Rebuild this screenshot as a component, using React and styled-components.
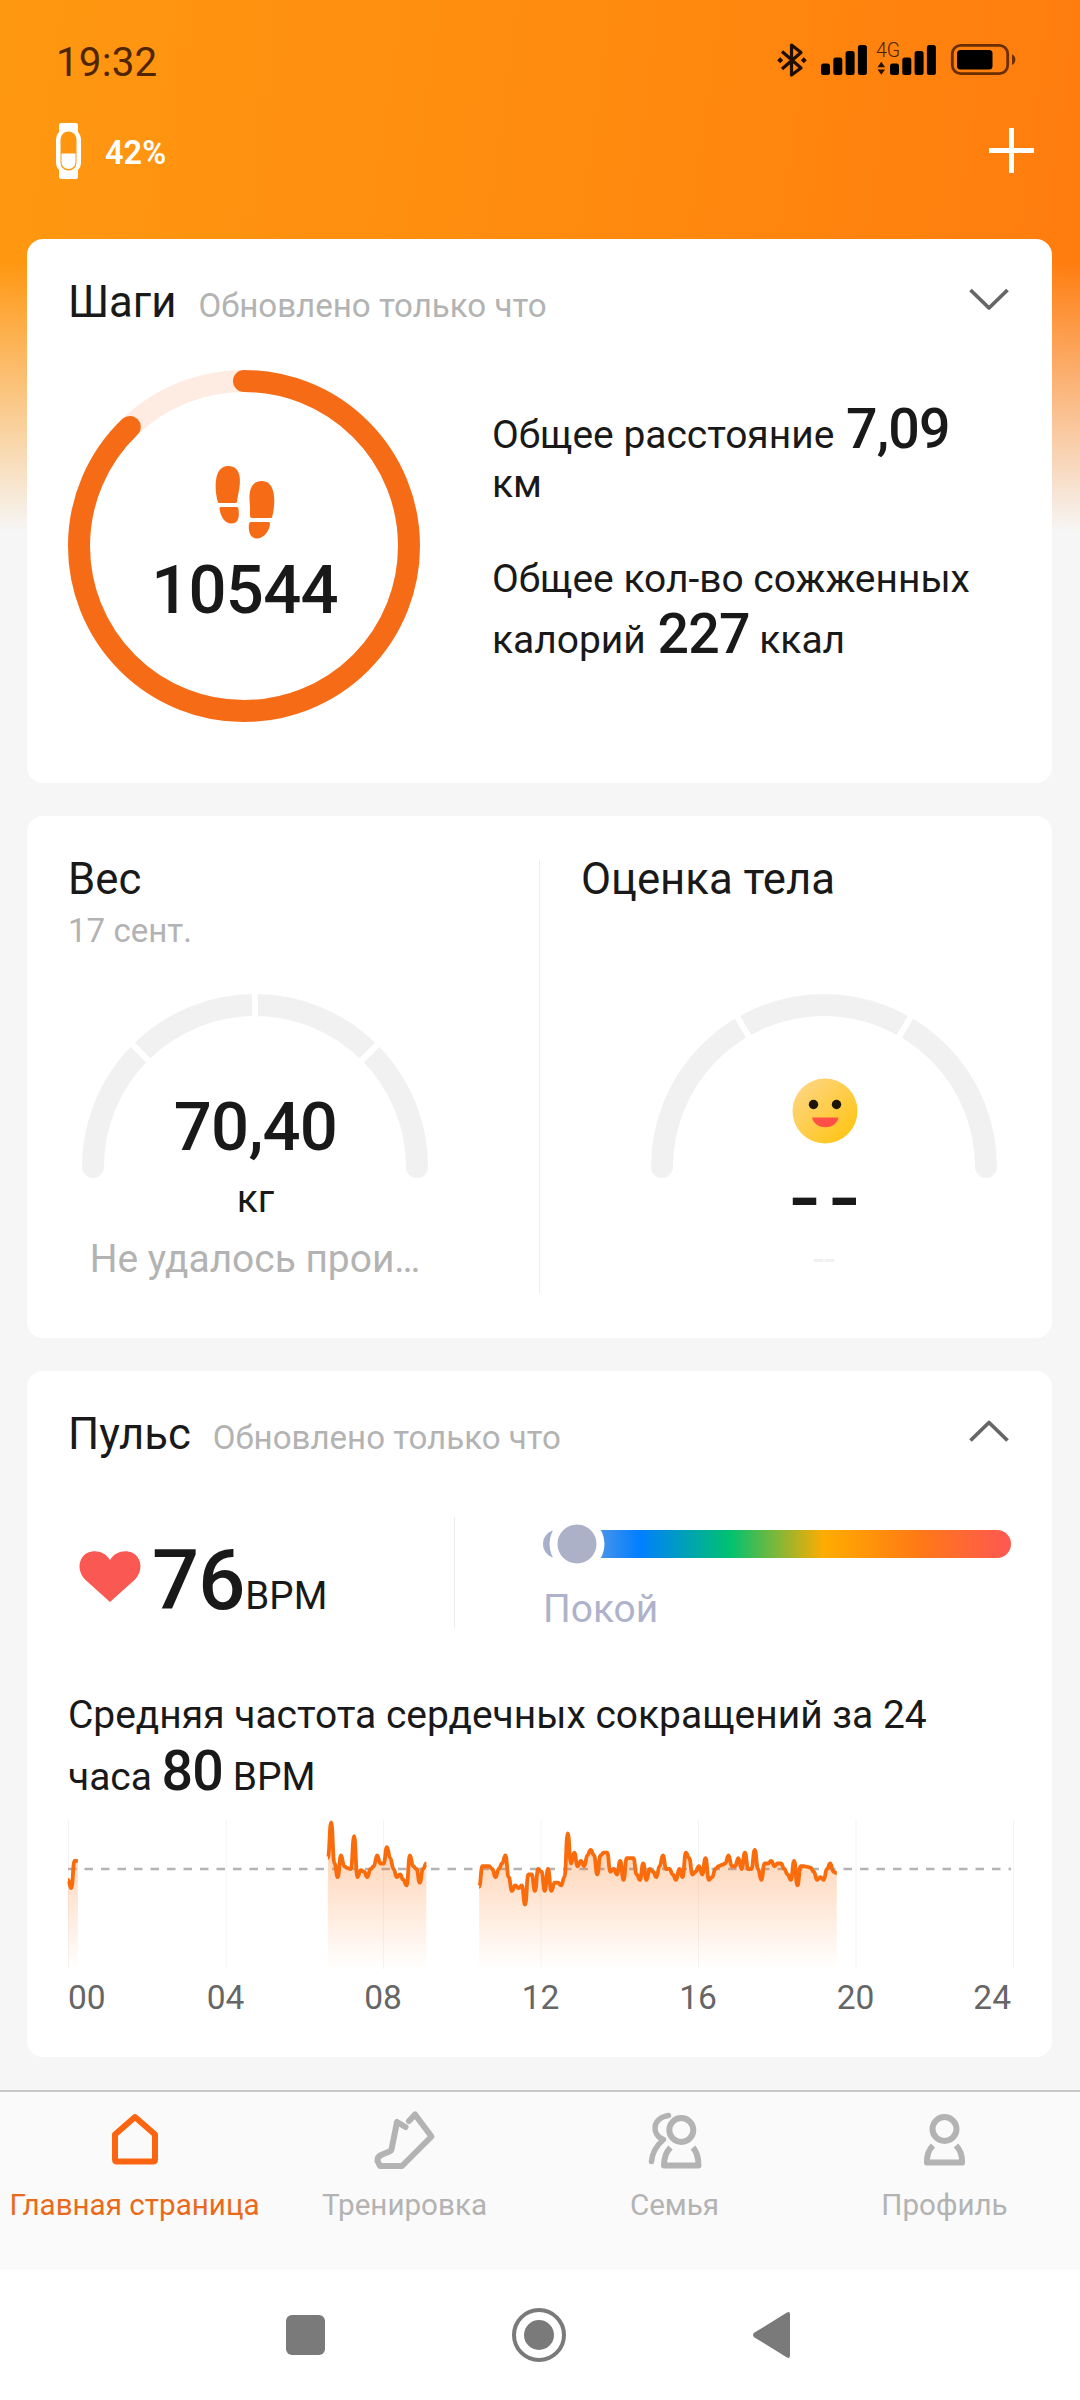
import React from 'react'
import styled, { createGlobalStyle } from 'styled-components'

const GlobalStyle = createGlobalStyle`
  * {
    box-sizing: border-box;
  }
  body {
    margin: 0;
    background: #f6f6f6;
    color: #191919;
    font-family: Roboto, 'Noto Sans', sans-serif;
    -webkit-font-smoothing: antialiased;
  }
  p, h2 {
    margin: 0;
    font-weight: 400;
  }
  svg {
    display: block;
    flex: none;
    overflow: visible;
  }
`

const Screen = styled.div`
  width: 1080px;
  height: 2400px;
  overflow: hidden;
  display: flex;
  flex-direction: column;
  background: linear-gradient(
        180deg,
        rgba(246, 246, 246, 0) 262px,
        #f6f6f6 532px
      )
      no-repeat,
    linear-gradient(98deg, #ff9811 0%, #ff8a0e 45%, #ff740f 100%);
`

const StatusBar = styled.div`
  display: flex;
  align-items: center;
  height: 100px;
  padding: 19px 64px 0 56px;
`

const Clock = styled.span`
  flex: 1;
  padding-top: 6px;
  font-size: 40.3px;
  line-height: 40px;
  font-weight: 450;
  letter-spacing: 0.2px;
  color: #4f2600;
`

const Toolbar = styled.header`
  display: flex;
  align-items: center;
  height: 101px;
  padding: 0 46px 0 56px;
`

const BatteryLevel = styled.span`
  flex: 1;
  padding: 4px 0 0 23px;
  font-size: 32.5px;
  line-height: 40px;
  font-weight: 600;
  color: #fff;
`

const Content = styled.main`
  flex: none;
  display: flex;
  flex-direction: column;
  gap: 33px;
  height: 1889px;
  padding: 38px 28px 0 27px;
`

const Card = styled.section`
  height: ${(props) => props.$height}px;
  padding: 32px 39px 0 41px;
  border-radius: 16px;
  background: #fff;
`

const CardHead = styled.div`
  display: flex;
  align-items: center;
  height: 60px;
  padding-right: 4px;
  > svg {
    margin-bottom: 3px;
  }
`

const CardTitle = styled.h2`
  margin-bottom: -2px;
  font-size: 43.7px;
  line-height: 62px;
`

const Updated = styled.span`
  margin-left: 22px;
  font-size: 33.1px;
  color: #b3b3b3;
`

const Heading = styled.div`
  flex: 1;
  display: flex;
  align-items: baseline;
`

const StepsBody = styled.div`
  display: flex;
  margin-top: 39px;
`

const Ring = styled.div`
  display: grid;
  width: 352px;
  height: 352px;
  > * {
    grid-area: 1 / 1;
  }
`

const RingContent = styled.div`
  display: flex;
  flex-direction: column;
  align-items: center;
  gap: 13px;
  padding: 96px 0 0 1px;
`

const Value = styled.div`
  font-size: 67px;
  line-height: 76px;
  font-weight: 500;
  letter-spacing: -0.8px;
`

const StepStats = styled.div`
  display: flex;
  flex-direction: column;
  gap: 49px;
  padding: 27px 0 0 72px;
`

const Stat = styled.p`
  font-size: 38.95px;
  line-height: 1.172;
  strong {
    margin-left: 2px;
    font-size: 55.5px;
    font-weight: 500;
    letter-spacing: -0.8px;
  }
`

const SplitCard = styled(Card)`
  display: grid;
  grid-template-columns: 471px 1fr;
`

const Column = styled.div`
  height: 462px;
  padding-left: ${(props) => (props.$second ? '41px' : 0)};
`

const Divided = styled.div`
  height: 433px;
  margin-top: 12px;
  border-left: 1px solid #ededed;
  ${Column} {
    margin-top: -12px;
  }
`

const Caption = styled.div`
  height: 45px;
  font-size: 33.1px;
  line-height: 45px;
  color: #b3b3b3;
`

const Gauge = styled.div`
  width: 346px;
  margin: 41px 0 0 ${(props) => props.$indent}px;
  text-align: center;
`

const GaugeDial = styled.div`
  display: grid;
  grid-template-rows: 175px;
  justify-items: center;
  align-items: end;
  > * {
    grid-area: 1 / 1;
  }
  > svg:first-child {
    align-self: start;
  }
`

const DialValue = styled(Value)`
  padding: 0 0 4px 1px;
`

const DialFace = styled.div`
  padding: 0 0 25px 1px;
`

const Unit = styled.div`
  padding-left: 1px;
  font-size: 39px;
  line-height: 60px;
`

const NoScore = styled(Unit)`
  padding-left: 6px;
  font-size: 67px;
  font-weight: 700;
  letter-spacing: 5px;
  transform: scaleX(1.27);
`

const Note = styled.div`
  overflow: hidden;
  text-overflow: ellipsis;
  white-space: nowrap;
  font-size: 38.9px;
  line-height: 59px;
  color: ${(props) => (props.$faint ? '#f0f0f0' : '#b3b3b3')};
`

const PulseRow = styled.div`
  display: flex;
  height: 111px;
  margin-top: 54px;
`

const PulseNow = styled.div`
  display: flex;
  width: 387px;
  padding-left: 11px;
  border-right: 1px solid #ededed;
  svg {
    margin-top: 34px;
  }
`

const PulseValue = styled.div`
  margin: 15px 0 0 11px;
  font-size: 83px;
  line-height: 97px;
  font-weight: 500;
  letter-spacing: -1px;
  small {
    margin-left: 1px;
    font-size: 38.5px;
    font-weight: 400;
    letter-spacing: 0;
  }
`

const PulseZone = styled.div`
  padding: 13px 0 0 88px;
`

const ZoneBar = styled.div`
  position: relative;
  width: 468px;
  height: 28px;
  border-radius: 14px;
  background: linear-gradient(
    90deg,
    #adb2c9 0%,
    #007fff 20.7%,
    #00c270 40%,
    #ffac00 60%,
    #ff7a15 80%,
    #ff5a4d 98%
  );
`

const ZoneKnob = styled.i`
  position: absolute;
  top: 50%;
  width: 55px;
  height: 55px;
  border: 8px solid #fff;
  border-radius: 50%;
  background: #adb1c8;
  transform: translate(-50%, -50%);
`

const ZoneName = styled.div`
  margin-top: 27px;
  font-size: 38.9px;
  line-height: 47px;
  color: #aeb2cb;
`

const Average = styled(Stat)`
  margin: 65px 0 16px;
  strong {
    margin-left: 0;
  }
`

const Hours = styled.div`
  display: grid;
  grid-template-columns: 1fr repeat(5, 2fr) 1fr;
  width: 945px;
  margin-top: 9px;
  font-size: 33.5px;
  line-height: 40px;
  text-align: center;
  color: #666;
  span:first-child {
    text-align: left;
  }
  span:last-child {
    padding-right: 2px;
    text-align: right;
  }
`

const TabBar = styled.nav`
  flex: none;
  display: grid;
  grid-template-columns: repeat(4, 1fr);
  height: 180px;
  border-top: 2px solid #c8c8c8;
  background: #fafafa;
`

const Tab = styled.div`
  display: flex;
  flex-direction: column;
  align-items: center;
  padding: 16px 1px 0 0;
  font-size: 29.6px;
  line-height: 40px;
  white-space: nowrap;
  color: ${(props) => (props.$active ? '#e96a1c' : '#b3b3b3')};
  svg {
    margin-bottom: 13px;
  }
`

const SystemNav = styled.div`
  flex: none;
  display: flex;
  align-items: center;
  justify-content: center;
  gap: 187px;
  height: 130px;
  padding-right: 4px;
  background: #fff;
`

const Bluetooth = () => (
  <svg width="30" height="34" viewBox="0 0 30 34" fill="none" stroke="#1f0d00" strokeWidth="3.2" strokeLinejoin="round">
    <path d="M5 8.500 24 25 14.500 32V2L24 9.500 5 26" />
    <path d="M3.200 14.200 6.200 17.200 3.200 20.200.2 17.200zM26.800 14.200l3 3-3 3-3-3z" fill="#1f0d00" stroke="none" />
  </svg>
)

const Signal = ({ data }) => (
  <svg width={data ? 59 : 46} height="34" viewBox={data ? '-13 0 59 34' : '0 0 46 34'}>
    {data && (
      <>
        <text x="-14" y="14" fontSize="19.5" fontWeight="300" fill="#4a1e00">
          4G
        </text>
        <path d="M-12.500 24.200h7.600l-3.800-5.400zM-12.500 26.400h7.600l-3.800 5.400z" fill="#2b1200" />
      </>
    )}
    {[11.5, 17.5, 24, 30].map((h, i) => (
      <rect key={h} x={i * 12.3} y={32 - h} width="9" height={h} rx="2.5" />
    ))}
  </svg>
)

const Battery = () => (
  <svg width="65" height="32" viewBox="0 0 65 32">
    <rect x="1.3" y="1.3" width="55.4" height="28.4" rx="8.5" fill="none" stroke="#6b2e00" strokeWidth="2.8" />
    <rect x="6" y="6" width="35.5" height="19.5" rx="3.5" />
    <path d="M61 10.300c4.500 1.700 4.500 9 0 10.600z" fill="#6b2e00" />
  </svg>
)

const StatusIcons = styled.div`
  display: flex;
  align-items: center;
`

const IconGap = styled.i`
  width: ${(props) => props.$w}px;
`

const Band = () => (
  <svg width="26" height="56" viewBox="0 0 26 56">
    <path
      fill="#fff"
      fillRule="evenodd"
      d="M5 0h15q2 0 2 2v7q3 3 3 7v24q0 4-3 7v7q0 2-2 2H5q-2 0-2-2v-7q-3-3-3-7V16q0-4 3-7V2q0-2 2-2zM12.500 8.500A8 8 0 0 0 4.500 16.500V39.500A8 8 0 0 0 20.500 39.500V16.500A8 8 0 0 0 12.500 8.500z"
    />
    <path fill="#fff" d="M5.500 30.500h14V39a7 7 0 0 1-14 0z" />
  </svg>
)

const Plus = () => (
  <svg width="45" height="45" viewBox="0 0 45 45" stroke="#fff" strokeWidth="5">
    <path d="M22.500 0V45M0 22.500H45" />
  </svg>
)

const Chevron = ({ up }) => (
  <svg width="40" height="22" viewBox="0 0 40 22" fill="none" stroke="#666" strokeWidth="3.8" strokeLinejoin="round">
    <path d={up ? 'M1.500 19.500 20 1.500 38.500 19.500' : 'M1.500 1 20 19 38.500 1'} />
  </svg>
)

const Footprints = () => (
  <svg width="60" height="73" viewBox="0 0 60 73" fill="#f66b16">
    <path d="M3 36.500C-1 22-1 0 13 0s13 16 10.500 27c-.8 4-1.200 6-1.200 8q0 2-2 2H5q-1.600 0-2-.5z" />
    <path d="M5.800 41H21.500q2 0 2 2C24.500 51 23.500 57.500 16.500 57.500S6 51 4.500 43q-.2-2 1.300-2z" />
    <path d="M57 51.500C61 37 61 15 47 15S34 31 35 40v10q0 2 2 2h18q1.600 0 2-.5z" />
    <path d="M53.500 56H36q-1.800 0-2 2c-1 8 1.500 14.500 8 14.500S54 66 55 58q.2-2-1.500-2z" />
  </svg>
)

const StepsRing = ({ progress }) => {
  const length = 2 * Math.PI * 165
  return (
    <svg width="352" height="352" viewBox="0 0 352 352" fill="none" strokeWidth="22">
      <circle cx="176" cy="176" r="165" stroke="#feece2" />
      <circle
        cx="176"
        cy="176"
        r="165"
        stroke="#f66b16"
        strokeLinecap="round"
        strokeDasharray={`${length * progress} ${length}`}
        transform="rotate(-90 176 176)"
      />
    </svg>
  )
}

const Dial = ({ gaps }) => (
  <svg width="346" height="185" viewBox="0 0 346 185" fill="none">
    <path d="M11 173a162 162 0 0 1 324 0" stroke="#f1f1f1" strokeWidth="22" strokeLinecap="round" />
    {gaps.map((angle) => (
      <path
        key={angle}
        d="M-3 173H26"
        stroke="#fff"
        strokeWidth="6"
        transform={`rotate(${angle} 173 173)`}
      />
    ))}
  </svg>
)

const Smile = () => (
  <svg width="66" height="66" viewBox="0 0 66 66">
    <defs>
      <linearGradient id="face" x1="0.1" y1="0.1" x2="0.9" y2="0.9">
        <stop offset="0" stopColor="#fed580" />
        <stop offset="1" stopColor="#ffc514" />
      </linearGradient>
    </defs>
    <circle cx="33" cy="33" r="32.5" fill="url(#face)" />
    <circle cx="21.500" cy="26.500" r="4.700" fill="#1d1608" />
    <circle cx="44.500" cy="26.500" r="4.700" fill="#1d1608" />
    <path d="M20 39.500H46.500C44 52.500 23 52.500 20 39.500z" fill="#ff5045" />
  </svg>
)

const Heart = () => (
  <svg width="62" height="51" viewBox="0 0 62 51" fill="#fa5852">
    <path d="M31 9C24.500-2.500 9-2 3.500 6-1.500 13 0 22 6 28.500L31 51 56 28.500C62 22 63.500 13 58.500 6 53-2 37.500-2.500 31 9z" />
  </svg>
)

// one reading per five minutes, start is the index of the first one
const readings = [
  { start: 0, bpm: [76, 73, 83, 83] },
  {
    start: 79.2,
    bpm: [
      84, 97, 82, 77, 85, 81, 80.3, 80, 92, 77, 79.6, 79, 77, 80, 81, 85, 82,
      82, 88, 84, 80, 77, 78, 76, 74, 85, 81, 80, 75, 80, 82
    ]
  },
  {
    start: 125.3,
    bpm: [
      73.5, 81, 81, 81, 80, 77, 80, 82, 85, 77, 72, 74, 73, 74, 67, 78, 78, 72,
      80, 79, 72, 80, 72, 75, 75, 74, 77, 93, 82, 86, 81, 83, 81, 85, 87, 85,
      78, 85, 86, 86, 79, 80, 78, 83, 76, 84, 84, 84, 78, 76, 82, 76, 80, 79,
      77, 81, 85, 80, 80, 78, 76, 80, 77, 86, 84, 78, 79, 81, 78, 84, 76, 77,
      80, 81, 81.5, 82, 85, 81, 81, 84, 80, 86, 80, 80, 87, 80, 76, 82, 82, 83,
      81, 82, 82, 80, 78, 76, 83, 74, 81, 81, 80.8, 80.5, 79, 76, 77, 76, 80,
      82, 79, 78.5
    ]
  }
]

const toX = (i) => (i * 945) / 288
const toY = (bpm) => 49 - (bpm - 80) * 2.74

const linePath = ({ start, bpm }) =>
  bpm
    .map((v, i) => {
      const x = toX(start + i)
      if (i === 0) return `M${x} ${toY(v)}`
      const mid = toX(start + i - 0.5)
      return `C${mid} ${toY(bpm[i - 1])} ${mid} ${toY(v)} ${x} ${toY(v)}`
    })
    .join('')

const PulseChart = () => (
  <svg width="945" height="149" viewBox="0 0 945 149" fill="none">
    <defs>
      <linearGradient id="area" gradientUnits="userSpaceOnUse" x1="0" y1="0" x2="0" y2="149">
        <stop offset="0" stopColor="#ff6a00" stopOpacity="0.36" />
        <stop offset="1" stopColor="#ff6a00" stopOpacity="0" />
      </linearGradient>
    </defs>
    {[0, 1, 2, 3, 4, 5, 6].map((i) => (
      <path key={i} d={`M${i * 157.5 + 0.5} 0V149`} stroke="#f4f4f4" />
    ))}
    <path d="M0 49H943" stroke="#b3b3b3" strokeWidth="2.6" strokeDasharray="8.500 8" />
    {readings.map((part) => (
      <g key={part.start}>
        <path
          d={`${linePath(part)}V149H${toX(part.start)}z`}
          fill="url(#area)"
        />
        <path d={linePath(part)} stroke="#f96b0b" strokeWidth="3.8" strokeLinejoin="round" />
      </g>
    ))}
  </svg>
)

const tabs = [
  {
    name: 'Главная страница',
    active: true,
    icon: (
      <path d="M26 9 46 26.500V51.500q0 2-2 2H8q-2 0-2-2V26.500z" transform="translate(6 0)" />
    )
  },
  {
    name: 'Тренировка',
    icon: (
      <path
        strokeLinecap="round"
        d="M32.500 19 24 14 18.500 41.500Q18 43 16.500 43.500L8 47Q4 49 4.500 53L7 58H29L58.500 28.500 42 6.500 36 13"
      />
    )
  },
  {
    name: 'Семья',
    icon: (
      <>
        <circle cx="38.300" cy="22" r="12" />
        <path d="M27.500 39.500Q21 46 21 57.500H55.500Q55.500 46 50 39.500" />
        <path strokeLinecap="round" strokeWidth="5.500" d="M25.500 7.500C9 10 8 26.500 20.500 31.500Q9.500 41 8.500 53.500" />
      </>
    )
  },
  {
    name: 'Профиль',
    icon: (
      <>
        <circle cx="31.500" cy="21" r="12" />
        <path d="M20 37.500Q13.500 44 14 54.500H49Q49.500 44 43 37.500" />
      </>
    )
  }
]

const App = () => (
  <Screen>
    <GlobalStyle />
    <StatusBar>
      <Clock>19:32</Clock>
      <StatusIcons>
        <Bluetooth />
        <IconGap $w={14} />
        <Signal />
        <IconGap $w={10} />
        <Signal data />
        <IconGap $w={15} />
        <Battery />
      </StatusIcons>
    </StatusBar>
    <Toolbar>
      <Band />
      <BatteryLevel>42%</BatteryLevel>
      <Plus />
    </Toolbar>

    <Content>
      <Card $height={544}>
        <CardHead>
          <Heading>
            <CardTitle>Шаги</CardTitle>
            <Updated>Обновлено только что</Updated>
          </Heading>
          <Chevron />
        </CardHead>
        <StepsBody>
          <Ring>
            <StepsRing progress={0.878} />
            <RingContent>
              <Footprints />
              <Value>10544</Value>
            </RingContent>
          </Ring>
          <StepStats>
            <Stat>
              Общее расстояние <strong>7,09</strong>
              <br />
              км
            </Stat>
            <Stat>
              Общее кол-во сожженных
              <br />
              калорий <strong>227</strong> ккал
            </Stat>
          </StepStats>
        </StepsBody>
      </Card>

      <SplitCard $height={522}>
        <Column>
          <CardTitle>Вес</CardTitle>
          <Caption>17 сент.</Caption>
          <Gauge $indent={14}>
            <GaugeDial>
              <Dial gaps={[45, 90, 135]} />
              <DialValue>70,40</DialValue>
            </GaugeDial>
            <Unit>кг</Unit>
            <Note>Не удалось прои…</Note>
          </Gauge>
        </Column>
        <Divided>
          <Column $second>
            <CardTitle>Оценка тела</CardTitle>
            <Caption />
            <Gauge $indent={70}>
              <GaugeDial>
                <Dial gaps={[60, 120]} />
                <DialFace>
                  <Smile />
                </DialFace>
              </GaugeDial>
              <NoScore>--</NoScore>
              <Note $faint>--</Note>
            </Gauge>
          </Column>
        </Divided>
      </SplitCard>

      <Card $height={686}>
        <CardHead>
          <Heading>
            <CardTitle>Пульс</CardTitle>
            <Updated>Обновлено только что</Updated>
          </Heading>
          <Chevron up />
        </CardHead>
        <PulseRow>
          <PulseNow>
            <Heart />
            <PulseValue>
              76<small>BPM</small>
            </PulseValue>
          </PulseNow>
          <PulseZone>
            <ZoneBar>
              <ZoneKnob style={{ left: 34 }} />
            </ZoneBar>
            <ZoneName>Покой</ZoneName>
          </PulseZone>
        </PulseRow>
        <Average>
          Средняя частота сердечных сокращений за 24
          <br />
          часа <strong>80</strong> BPM
        </Average>
        <PulseChart />
        <Hours>
          {['00', '04', '08', '12', '16', '20', '24'].map((hour) => (
            <span key={hour}>{hour}</span>
          ))}
        </Hours>
      </Card>
    </Content>

    <TabBar>
      {tabs.map((tab) => (
        <Tab key={tab.name} $active={tab.active}>
          <svg
            width="64"
            height="64"
            viewBox="0 0 64 64"
            fill="none"
            stroke={tab.active ? '#fb6410' : '#b3b3b3'}
            strokeWidth="6"
            strokeLinejoin="round"
          >
            {tab.icon}
          </svg>
          {tab.name}
        </Tab>
      ))}
    </TabBar>

    <SystemNav>
      <svg width="39" height="40" viewBox="0 0 39 40" fill="#7a7a7a">
        <rect width="39" height="40" rx="6" />
      </svg>
      <svg width="54" height="54" viewBox="0 0 54 54" fill="#7a7a7a">
        <circle cx="27" cy="27" r="25" fill="none" stroke="#7a7a7a" strokeWidth="4" />
        <circle cx="27" cy="27" r="15" />
      </svg>
      <svg width="37" height="46" viewBox="0 0 37 46" fill="#7a7a7a">
        <path d="M34 .5q3-1.500 3 2V43.500q0 3.500-3 2L1.500 25.500q-3-2.500 0-5z" />
      </svg>
    </SystemNav>
  </Screen>
)

export default App
